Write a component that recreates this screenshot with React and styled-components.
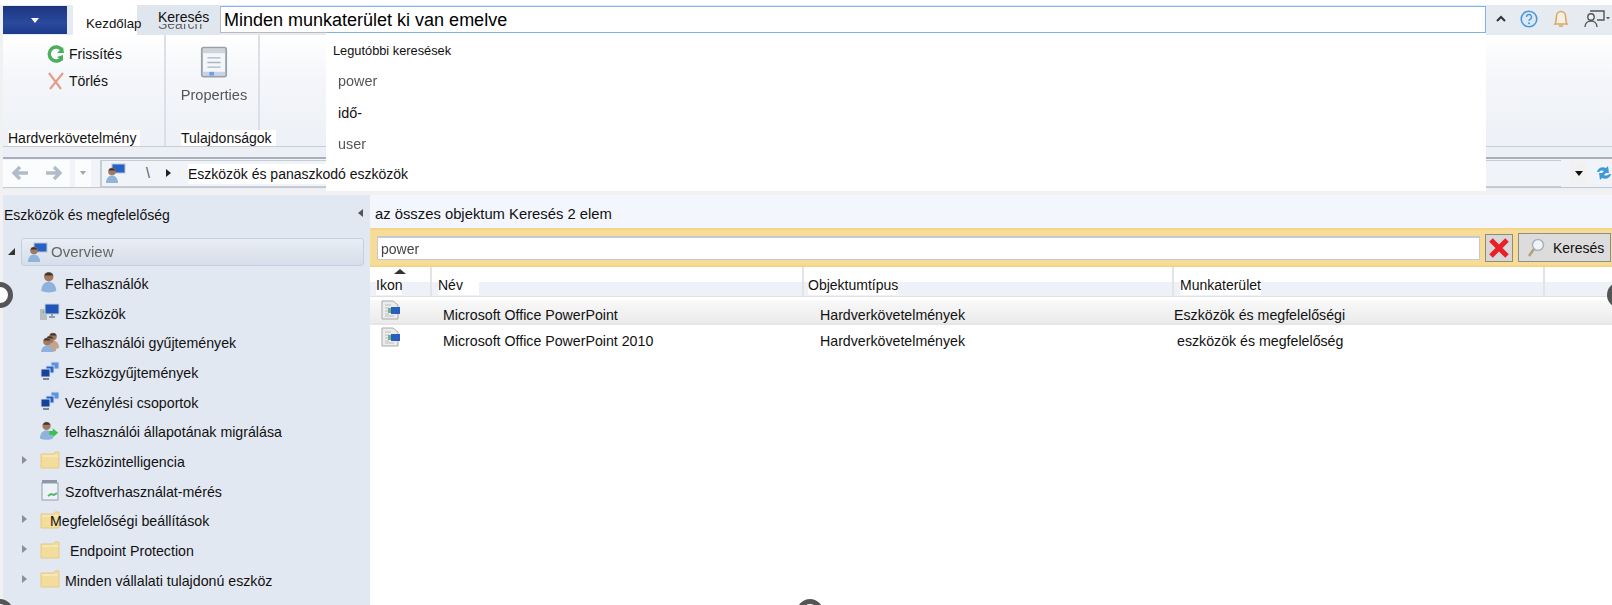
import React from "react";
import styled, { createGlobalStyle } from "styled-components";

const GlobalStyle = createGlobalStyle`
  html, body {
    margin: 0;
    padding: 0;
    background: #fff;
  }
  body {
    font-family: "Liberation Sans", Arial, sans-serif;
    font-size: 14px;
    color: #111;
  }
`;

const Page = styled.div`
  position: relative;
  width: 1612px;
  height: 605px;
  overflow: hidden;
  padding-left: 3px;
  box-sizing: border-box;
  background: linear-gradient(#fff 5px, #f1f1f1 5px);
`;

/* title row */
const TopRow = styled.div`
  display: flex;
  align-items: flex-start;
  height: 30px;
  margin-top: 5px;
  background: #e6ebf2;
`;

const FileButton = styled.div`
  display: flex;
  align-items: center;
  justify-content: center;
  width: 64px;
  height: 28px;
  margin-top: 1px;
  background: linear-gradient(#1c3580, #2a4a9d 60%, #1d3a8c);
  &::after {
    content: "";
    border: 4px solid transparent;
    border-top: 5px solid #fff;
    border-bottom: 0;
  }
`;

const HomeTab = styled.div`
  position: relative;
  z-index: 1;
  width: 64px;
  height: 30px;
  margin-left: 6px;
  padding: 11px 0 0 13px;
  box-sizing: border-box;
  background: #fff;
  white-space: nowrap;
  font-size: 13.3px;
`;

const SearchTab = styled.div`
  position: relative;
  width: 83px;
  height: 30px;
  padding: 5px 0 0 21px;
  box-sizing: border-box;
  background: #e0e6ee;
`;

const GhostLabel = styled.span`
  position: absolute;
  left: 21px;
  top: 11px;
  color: #666;
  filter: blur(0.5px);
`;

const TabLabel = styled.span`
  position: relative;
  display: block;
  width: 54px;
  height: 14px;
  line-height: 14px;
  background: #e0e6ee;
  z-index: 1;
`;

const SearchInput = styled.div`
  position: relative;
  flex: none;
  width: 1266px;
  height: 27px;
  margin-top: 1px;
  padding: 3px 0 0 3px;
  box-sizing: border-box;
  background: #fff;
  border: 1px solid #7fb4ea;
  border-left-color: #bbb;
  font-size: 18px;
  color: #000;
  &::after {
    content: "";
    position: absolute;
    left: 0;
    bottom: -1px;
    width: 106px;
    height: 1px;
    background: #bbb;
  }
`;

const TopIcons = styled.div`
  display: flex;
  align-items: center;
  gap: 14px;
  padding: 4px 0 0 10px;
  svg {
    filter: blur(0.3px);
  }
`;

/* ribbon */
const Ribbon = styled.div`
  display: flex;
  height: 112px;
  background: linear-gradient(#fff, #f4f6fa 40%, #edf0f6);
  border-bottom: 1px solid #c9ccd2;
  box-sizing: border-box;
`;

const RibbonGroup = styled.div`
  display: flex;
  flex-direction: column;
  width: ${(p) => p.$width}px;
  padding-left: ${(p) => p.$indent}px;
  box-sizing: border-box;
  border-right: 2px solid #dcdfe5;
`;

const RibbonBody = styled.div`
  flex: 1;
  padding-top: 5px;
`;

const RibbonAction = styled.div`
  display: flex;
  align-items: center;
  gap: 3px;
  height: 27px;
  padding-left: 38px;
`;

const BigAction = styled.div`
  display: flex;
  flex-direction: column;
  align-items: center;
  gap: 8px;
  width: 66px;
  margin-top: 6px;
  color: #555;
  font-size: 14.6px;
  white-space: nowrap;
  filter: blur(0.45px);
`;

const GroupLabel = styled.div`
  height: 16px;
  line-height: 16px;
  width: fit-content;
  background: #fff;
  padding-right: 4px;
  white-space: nowrap;
`;

/* address bar */
const NavStrip = styled.div`
  height: 43px;
  padding-top: 10px;
  box-sizing: border-box;
  background: #eceff5;
`;

const NavRow = styled.div`
  display: flex;
  align-items: center;
  height: 31px;
  border-top: 2px solid #a9afb8;
  border-bottom: 1px solid #c3c8d0;
  box-sizing: border-box;
  background: #f0f3f8;
`;

const NavButton = styled.div`
  display: flex;
  align-items: center;
  justify-content: center;
  width: ${(p) => p.$width}px;
  height: 27px;
  margin-right: ${(p) => p.$gap ?? 0}px;
  background: #fbfcfd;
  filter: blur(0.4px);
`;

const Address = styled.div`
  display: flex;
  align-items: center;
  flex: 1;
  height: 27px;
  margin: 0 9px;
  padding-left: 4px;
  box-sizing: border-box;
  border: 1px solid #c6ccd4;
  border-width: 1px 0 1px 2px;
`;

const Crumb = styled.span`
  color: #555;
  margin: 0 16px 0 20px;
`;

const CrumbArrow = styled.span`
  width: 0;
  height: 0;
  border: 4px solid transparent;
  border-left: 5px solid #222;
  border-right: 0;
  margin-right: 17px;
`;

const CrumbText = styled.span`
  position: relative;
  z-index: 3;
  top: 1px;
  background: #fff;
  padding: 2px 0;
`;

const NavEnd = styled.div`
  display: flex;
  align-items: center;
  gap: 9px;
`;

const DropButton = styled.div`
  display: flex;
  align-items: center;
  justify-content: center;
  width: 17px;
  height: 24px;
  background: #f1f1f1;
  &::after {
    content: "";
    border: 4px solid transparent;
    border-top: 5px solid #111;
    border-bottom: 0;
  }
`;

/* dropdown over the ribbon */
const SearchDropdown = styled.div`
  position: absolute;
  z-index: 2;
  left: 326px;
  top: 33px;
  width: 1160px;
  height: 158px;
  padding: 10px 0 0 7px;
  box-sizing: border-box;
  background: #fff;
`;

const RecentTitle = styled.div`
  height: 23px;
  font-size: 12.8px;
`;

const RecentItem = styled.div`
  height: 31.5px;
  line-height: 31.5px;
  padding-left: 5px;
  font-size: 14.4px;
  color: ${(p) => (p.$dim ? "#555" : "#111")};
  filter: ${(p) => (p.$dim ? "blur(0.4px)" : "none")};
`;

/* lower part */
const Content = styled.div`
  display: flex;
  height: 410px;
  margin-top: 5px;
`;

const Sidebar = styled.div`
  width: 367px;
  flex: none;
  background: #e2e8f1;
`;

const SideHead = styled.div`
  display: flex;
  align-items: center;
  justify-content: space-between;
  height: 39px;
  padding: 0 7px 0 1px;
`;

const CollapseArrow = styled.span`
  border: 4px solid transparent;
  border-right: 5px solid #555;
  border-left: 0;
  margin-bottom: 4px;
`;

const Tree = styled.div`
  display: flex;
  flex-direction: column;
  padding-top: 2px;
  font-size: 14.2px;
`;

const OverviewRow = styled.div`
  display: flex;
  align-items: center;
  height: 31px;
  margin-bottom: 2px;
  padding-left: 5px;
`;

const OverviewBox = styled.div`
  display: flex;
  align-items: center;
  gap: 3px;
  flex: 1;
  height: 28px;
  margin: 0 6px;
  padding-left: 6px;
  box-sizing: border-box;
  background: linear-gradient(#e9eef5, #d5deea);
  border: 1px solid #c6d0dd;
  border-radius: 3px;
  color: #666;
  font-size: 15px;
  span {
    filter: blur(0.4px);
  }
`;

const TreeRow = styled.div`
  display: flex;
  align-items: center;
  height: 29.7px;
  padding-left: 19px;
`;

const Twist = styled.span`
  width: 18px;
  flex: none;
  &::before {
    content: "";
    display: ${(p) => (p.$open ? "block" : "none")};
    width: 0;
    height: 0;
    margin-bottom: 4px;
    border: 4px solid transparent;
    border-left: 5px solid #8b8f96;
    border-right: 0;
  }
`;

const TreeIcon = styled.span`
  display: flex;
  justify-content: center;
  width: 20px;
  flex: none;
  margin-bottom: 3px;
  svg {
    filter: blur(0.4px);
  }
`;

const TreeLabel = styled.span`
  position: relative;
  margin-left: ${(p) => p.$shift ?? 5}px;
  white-space: nowrap;
`;

const OpenTwist = styled.span`
  border-left: 7px solid transparent;
  border-bottom: 7px solid #333;
`;

const Main = styled.div`
  flex: 1;
  min-width: 0;
  background: #fff;
`;

const MainHead = styled.div`
  height: 33px;
  padding: 11px 0 0 5px;
  box-sizing: border-box;
  background: #f3f6fd;
  font-size: 14.8px;
`;

const SearchBar = styled.div`
  display: flex;
  align-items: center;
  height: 39px;
  padding: 0 1px 0 7px;
  box-sizing: border-box;
  background: #f7dc97;
  border-top: 2px solid #f4d587;
  border-bottom: 2px solid #f4d587;
`;

const FilterInput = styled.div`
  flex: 1;
  height: 24px;
  line-height: 22px;
  padding-left: 3px;
  box-sizing: border-box;
  background: #fff;
  border: 1px solid #c6c9ce;
  border-top-width: 2px;
  color: #444;
  filter: blur(0.25px);
`;

const ClearButton = styled.div`
  display: flex;
  align-items: center;
  justify-content: center;
  width: 28px;
  height: 28px;
  margin-left: 5px;
  box-sizing: border-box;
  background: #d8d8d8;
  border: 1px solid #918b78;
`;

const SearchButton = styled.div`
  display: flex;
  align-items: center;
  gap: 8px;
  width: 93px;
  height: 29px;
  margin-left: 5px;
  padding-left: 8px;
  box-sizing: border-box;
  background: #dcdcdc;
  border: 1px solid #8d8d8d;
`;

const gridColumns = "62px 372px 370px 371px 1fr";

const HeadRow = styled.div`
  position: relative;
  display: grid;
  grid-template-columns: ${gridColumns};
  height: 30px;
  background: linear-gradient(#fff 52%, #eef2f8 52%);
  border-bottom: 1px solid #dfe1e5;
  box-sizing: border-box;
`;

const HeadCell = styled.div`
  padding: 10px 0 0 ${(p) => p.$pad}px;
  box-sizing: border-box;
  border-right: 2px solid #e2e4e8;
`;

const HeadText = styled.span`
  display: inline-block;
  height: 18px;
  padding-right: ${(p) => p.$patch ?? 0}px;
  background: #fff;
`;

const SortArrow = styled.span`
  position: absolute;
  left: 24px;
  top: 2px;
  border: 6px solid transparent;
  border-bottom: 5px solid #333;
  border-top: 0;
`;

const DataRow = styled.div`
  display: grid;
  grid-template-columns: ${gridColumns};
  align-items: ${(p) => (p.$selected ? "end" : "center")};
  height: ${(p) => (p.$selected ? 25 : 32)}px;
  margin-top: ${(p) => (p.$selected ? 3 : 0)}px;
  background: ${(p) =>
    p.$selected ? "linear-gradient(#f9f9f9, #ebebeb)" : "#fff"};
  border-bottom: ${(p) => (p.$selected ? "2px solid #e6e6e6" : "0")};
  box-sizing: border-box;
  font-size: 14.2px;
`;

const DataCell = styled.div`
  padding-left: ${(p) => p.$pad}px;
  white-space: nowrap;
`;

const IconCell = styled.div`
  display: flex;
  align-self: start;
  padding: ${(p) => p.$top}px 0 0 11px;
  svg {
    filter: blur(0.45px);
  }
`;

/* selection handles over the capture */
const Handle = styled.span`
  position: absolute;
  z-index: 5;
  left: ${(p) => p.$x}px;
  top: ${(p) => p.$y}px;
  width: 26px;
  height: 26px;
  margin: -13px 0 0 -13px;
  box-sizing: border-box;
  border-radius: 50%;
  background: #fff;
  border: 5px solid #555;
`;

/* drawn icons */
const Refresh = () => (
  <svg width="20" height="20" viewBox="0 0 20 20">
    <path d="M16 6A7 7 0 1 0 16 14" fill="none" stroke="#4cae5c" strokeWidth="3.4" />
    <path d="M11 9h7l-1 -6zM11 13l6-2 0 6z" fill="#4cae5c" />
  </svg>
);

const Cross = () => (
  <svg width="20" height="20" viewBox="0 0 20 20">
    <path d="M3 2L15 18M17 2L4 18" fill="none" stroke="#e2a08c" strokeWidth="2.200" />
  </svg>
);

const PropertySheet = () => (
  <svg width="28" height="33" viewBox="0 0 30 34">
    <rect x="2" y="1" width="26" height="31" rx="2" fill="#f4f6f9" stroke="#9aa0a8" strokeWidth="2" />
    <rect x="3" y="2" width="24" height="5" fill="#cfd4da" />
    <path d="M8 12h14M8 17h14M8 22h14" stroke="#a6b6c9" strokeWidth="1.5" />
    <rect x="3" y="27" width="24" height="4" fill="#c4d4e6" />
    <rect x="10" y="27" width="5" height="4" fill="#6ba3dc" />
  </svg>
);

const NavArrow = ({ back }) => (
  <svg width="20" height="16" viewBox="0 0 20 16">
    <path
      d={back ? "M18 8H5M10 2L4 8l6 6" : "M2 8h13M10 2l6 6-6 6"}
      fill="none"
      stroke="#b2bcc9"
      strokeWidth="3.4"
    />
  </svg>
);

const SmallDrop = styled.span`
  border: 3px solid transparent;
  border-top: 4px solid #a5a5a5;
  border-bottom: 0;
`;

const Person = ({ x = 0, y = 0, shirt = "#8fb3dc" }) => (
  <g transform={`translate(${x} ${y})`}>
    <circle cx="6" cy="4.500" r="3.800" fill="#a3785e" />
    <path d="M2.500 3.500a3.800 3.800 0 0 1 7 0z" fill="#3c3733" />
    <path d="M0 16c0-5 3-7.500 6-7.500s6 2.500 6 7.500c-3 1.500-9 1.500-12 0z" fill={shirt} />
  </g>
);

const ConsoleIcon = () => (
  <svg width="20" height="20" viewBox="0 0 20 20">
    <rect x="6" y="1" width="13" height="9" fill="#2861c5" stroke="#b9c5d6" />
    <Person x="0" y="4" />
  </svg>
);

const UserIcon = () => (
  <svg width="18" height="22" viewBox="0 0 18 22">
    <g transform="translate(-1 0) scale(1.250)">
      <Person x="1" y="0" shirt="#8fb2dc" />
    </g>
  </svg>
);

const DeviceIcon = () => (
  <svg width="20" height="18" viewBox="0 0 20 18">
    <rect x="0" y="6" width="7" height="11" fill="#b9bdc2" />
    <circle cx="3.500" cy="9" r="1" fill="#46c26a" />
    <rect x="5" y="1" width="14" height="10" fill="#1f56b8" stroke="#c7d0db" />
    <path d="M9 14h6M12 11v3" stroke="#8fa0b5" strokeWidth="2" />
  </svg>
);

const UserGroupIcon = () => (
  <svg width="18" height="20" viewBox="0 0 18 20">
    <Person x="6" y="0" shirt="#c1a68c" />
    <Person x="3" y="3" shirt="#c1a68c" />
    <Person x="0" y="5" shirt="#8fb2dc" />
  </svg>
);

const DeviceGroupIcon = () => (
  <svg width="20" height="20" viewBox="0 0 20 20">
    <rect x="11" y="1" width="8" height="7" fill="#5f92de" stroke="#d2deee" />
    <rect x="6" y="5" width="8" height="7" fill="#2a62cc" stroke="#d2deee" />
    <rect x="1" y="8" width="9" height="8" fill="#17439b" stroke="#d2deee" />
    <path d="M3 18h6" stroke="#7d8896" strokeWidth="2" />
  </svg>
);

const MigrateIcon = () => (
  <svg width="22" height="22" viewBox="0 0 22 22">
    <g transform="scale(1.200)">
      <Person x="0" y="0" />
    </g>
    <path d="M10 11h4V8l6 5-6 5v-3h-4z" fill="#3cc150" />
  </svg>
);

const FolderIcon = () => (
  <svg width="20" height="18" viewBox="0 0 20 18">
    <path d="M1 3h13l1-2h4v16H1z" fill="#f3dd9c" stroke="#e5cb83" />
    <path d="M2 5h16" stroke="#fbf0cf" />
  </svg>
);

const MeterIcon = () => (
  <svg width="20" height="22" viewBox="0 0 20 22">
    <rect x="2" y="1" width="15" height="4" fill="#8d97a8" />
    <rect x="2" y="4" width="16" height="17" fill="#eef2f7" stroke="#8f9db3" />
    <path d="M8 17l3-2 3 1 3-2" fill="none" stroke="#53b56a" strokeWidth="2" />
  </svg>
);

const DocIcon = () => (
  <svg width="20" height="20" viewBox="0 0 20 20">
    <path d="M1 1h11l5 4v14H1z" fill="#ececec" stroke="#a9a9a9" />
    <path d="M4 5h6M4 8h4M4 11h4M4 14h4M4 16h9" stroke="#bdbdbd" />
    <rect x="10" y="7" width="9" height="7" fill="#2a5fc0" />
    <rect x="7" y="8" width="3" height="5" fill="#62b98a" />
  </svg>
);

const RedCross = () => (
  <svg width="22" height="20" viewBox="0 0 22 20">
    <path d="M3 2l16 16M19 2L3 18" stroke="#e8202a" strokeWidth="5" />
  </svg>
);

const Magnifier = () => (
  <svg width="18" height="20" viewBox="0 0 18 20">
    <circle cx="11" cy="7" r="5.500" fill="#f1f4f7" stroke="#a9b4bf" strokeWidth="1.500" />
    <path d="M7 11L2 18" stroke="#b39f78" strokeWidth="2.500" />
  </svg>
);

const Caret = () => (
  <svg width="10" height="8" viewBox="0 0 10 8">
    <path d="M1 6l4-4 4 4" fill="none" stroke="#333" strokeWidth="2" />
  </svg>
);

const HelpIcon = () => (
  <svg width="18" height="18" viewBox="0 0 18 18">
    <circle cx="9" cy="9" r="7.800" fill="#dbe9f7" stroke="#4d97d9" strokeWidth="1.600" />
    <path d="M6.500 7a2.500 2.500 0 1 1 3.500 2.300c-.8.400-1 .8-1 1.700" fill="none" stroke="#4d97d9" strokeWidth="1.400" />
    <circle cx="9" cy="13.300" r="1" fill="#4d97d9" />
  </svg>
);

const BellIcon = () => (
  <svg width="18" height="20" viewBox="0 0 18 20">
    <path d="M3 15c1.500-2 1-5 1.500-8a4.500 4.500 0 0 1 9 0c.5 3 0 6 1.500 8z" fill="#f5f0e6" stroke="#dba660" strokeWidth="1.500" />
    <path d="M7 17h4" stroke="#dba660" strokeWidth="1.600" />
  </svg>
);

const FeedbackIcon = () => (
  <svg width="26" height="20" viewBox="0 0 26 20">
    <path d="M6 2h14v9h-7" fill="none" stroke="#555" strokeWidth="1.400" />
    <circle cx="7" cy="8" r="3.200" fill="#eef1f5" stroke="#555" strokeWidth="1.400" />
    <path d="M1 18c0-4 3-6 6-6s6 2 6 6" fill="none" stroke="#555" strokeWidth="1.400" />
    <path d="M22 8h4l-2 2.500z" fill="#555" />
  </svg>
);

const SyncIcon = () => (
  <svg width="16" height="20" viewBox="0 0 16 20">
    <path d="M1 9c1-4 5-6 9-4l2-2 1 7H6l2-2c-2-1-4-.5-5 1z" fill="#3f9ad6" />
    <path d="M15 11c-1 4-5 6-9 4l-2 2-1-7h7l-2 2c2 1 4 .5 5-1z" fill="#3f9ad6" />
  </svg>
);

const treeItems = [
  { label: "Felhasználók", icon: <UserIcon /> },
  { label: "Eszközök", icon: <DeviceIcon /> },
  { label: "Felhasználói gyűjtemények", icon: <UserGroupIcon /> },
  { label: "Eszközgyűjtemények", icon: <DeviceGroupIcon /> },
  { label: "Vezénylési csoportok", icon: <DeviceGroupIcon /> },
  { label: "felhasználói állapotának migrálása", icon: <MigrateIcon /> },
  { label: "Eszközintelligencia", icon: <FolderIcon />, open: true },
  { label: "Szoftverhasználat-mérés", icon: <MeterIcon /> },
  { label: "Megfelelőségi beállítások", icon: <FolderIcon />, open: true, shift: -10 },
  { label: "Endpoint Protection", icon: <FolderIcon />, open: true, shift: 10 },
  { label: "Minden vállalati tulajdonú eszköz", icon: <FolderIcon />, open: true },
];

const rows = [
  {
    name: "Microsoft Office PowerPoint",
    type: "Hardverkövetelmények",
    area: "Eszközök és megfelelőségi",
    areaPad: 0,
    selected: true,
    iconTop: 0,
  },
  {
    name: "Microsoft Office PowerPoint 2010",
    type: "Hardverkövetelmények",
    area: "eszközök és megfelelőség",
    areaPad: 3,
    iconTop: 2,
  },
];

export default function App() {
  return (
    <>
      <GlobalStyle />
      <Page>
        <TopRow>
          <FileButton />
          <HomeTab>Kezdőlap</HomeTab>
          <SearchTab>
            <GhostLabel>Search</GhostLabel>
            <TabLabel>Keresés</TabLabel>
          </SearchTab>
          <SearchInput>Minden munkaterület ki van emelve</SearchInput>
          <TopIcons>
            <Caret />
            <HelpIcon />
            <BellIcon />
            <FeedbackIcon />
          </TopIcons>
        </TopRow>

        <Ribbon>
          <RibbonGroup $width={163} $indent={5}>
            <RibbonBody>
              <RibbonAction>
                <Refresh />
                Frissítés
              </RibbonAction>
              <RibbonAction>
                <Cross />
                Törlés
              </RibbonAction>
            </RibbonBody>
            <GroupLabel>Hardverkövetelmény</GroupLabel>
          </RibbonGroup>
          <RibbonGroup $width={94} $indent={15}>
            <RibbonBody>
              <BigAction>
                <PropertySheet />
                <span>Properties</span>
              </BigAction>
            </RibbonBody>
            <GroupLabel>Tulajdonságok</GroupLabel>
          </RibbonGroup>
        </Ribbon>

        <NavStrip>
          <NavRow>
            <NavButton $width={34}>
              <NavArrow back />
            </NavButton>
            <NavButton $width={33} $gap={5}>
              <NavArrow />
            </NavButton>
            <NavButton $width={16}>
              <SmallDrop />
            </NavButton>
            <Address>
              <ConsoleIcon />
              <Crumb>\</Crumb>
              <CrumbArrow />
              <CrumbText>Eszközök és panaszkodó eszközök</CrumbText>
            </Address>
            <NavEnd>
              <DropButton />
              <SyncIcon />
            </NavEnd>
          </NavRow>
        </NavStrip>

        <SearchDropdown>
          <RecentTitle>Legutóbbi keresések</RecentTitle>
          <RecentItem $dim>power</RecentItem>
          <RecentItem>idő-</RecentItem>
          <RecentItem $dim>user</RecentItem>
        </SearchDropdown>

        <Content>
          <Sidebar>
            <SideHead>
              <span>Eszközök és megfelelőség</span>
              <CollapseArrow />
            </SideHead>
            <Tree>
              <OverviewRow>
                <OpenTwist />
                <OverviewBox>
                  <ConsoleIcon />
                  <span>Overview</span>
                </OverviewBox>
              </OverviewRow>
              {treeItems.map((item) => (
                <TreeRow key={item.label}>
                  <Twist $open={item.open} />
                  <TreeIcon>{item.icon}</TreeIcon>
                  <TreeLabel $shift={item.shift}>{item.label}</TreeLabel>
                </TreeRow>
              ))}
            </Tree>
          </Sidebar>

          <Main>
            <MainHead>az összes objektum Keresés 2 elem</MainHead>
            <SearchBar>
              <FilterInput>power</FilterInput>
              <ClearButton>
                <RedCross />
              </ClearButton>
              <SearchButton>
                <Magnifier />
                Keresés
              </SearchButton>
            </SearchBar>
            <HeadRow>
              <SortArrow />
              <HeadCell $pad={6}>
                <HeadText>Ikon</HeadText>
              </HeadCell>
              <HeadCell $pad={6}>
                <HeadText $patch={16}>Név</HeadText>
              </HeadCell>
              <HeadCell $pad={4}>
                <HeadText>Objektumtípus</HeadText>
              </HeadCell>
              <HeadCell $pad={6}>
                <HeadText>Munkaterület</HeadText>
              </HeadCell>
              <div />
            </HeadRow>
            {rows.map((row) => (
              <DataRow key={row.name} $selected={row.selected}>
                <IconCell $top={row.iconTop}>
                  <DocIcon />
                </IconCell>
                <DataCell $pad={11}>{row.name}</DataCell>
                <DataCell $pad={16}>{row.type}</DataCell>
                <DataCell $pad={row.areaPad}>{row.area}</DataCell>
              </DataRow>
            ))}
          </Main>
        </Content>

        <Handle $x={0} $y={295} />
        <Handle $x={1620} $y={295} />
        <Handle $x={810} $y={612} />
        <Handle $x={0} $y={612} />
      </Page>
    </>
  );
}
